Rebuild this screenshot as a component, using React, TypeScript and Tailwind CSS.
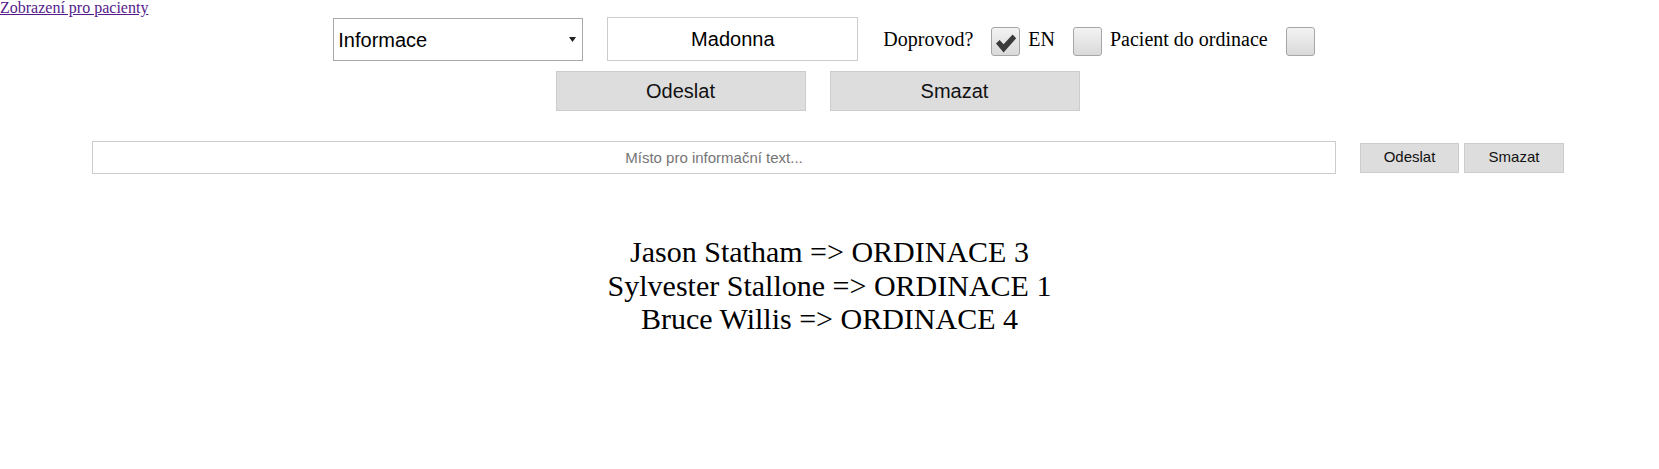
import React from "react";

function Box({ checked }: { checked?: boolean }) {
  return (
    <div className="mt-[5px] w-[29px] h-[29px] shrink-0 rounded-[3px] border border-[#a6a6a6] bg-gradient-to-b from-[#f3f3f3] to-[#d9d9d9]">
      {checked && (
        <svg width="27" height="27" viewBox="0 0 27 27" className="block">
          <path
            d="M4 15.5 L7.6 12 L11.6 16.2 L20.6 6.6 L24.2 10.2 L11.6 24.4 Z"
            fill="#3a3a3a"
          />
        </svg>
      )}
    </div>
  );
}

export default function App() {
  return (
    <div className="w-[1659px] h-[469px] bg-white text-black font-['Liberation_Sans',Arial,sans-serif]">
      <div className="h-[17px] leading-[16px] text-[16px] font-['Liberation_Serif','Times_New_Roman',serif]">
        <a href="#" className="text-[#551a8b] underline">
          Zobrazení pro pacienty
        </a>
      </div>

      <div className="flex justify-center items-center h-[44px] pr-[11px]">
        <div className="self-end w-[250px] h-[43px] mr-[24px] border border-[#a9a9a9] bg-white flex items-center pl-[4px] pr-[6px] text-[20px] shrink-0">
          <span className="flex-1">Informace</span>
          <svg width="7" height="5" viewBox="0 0 7 5" className="block">
            <path d="M0 0 L7 0 L3.5 5 Z" fill="#222" />
          </svg>
        </div>
        <input
          readOnly
          value="Madonna"
          className="w-[251px] h-[44px] mr-[25px] border border-[#cccccc] bg-white text-center text-[20px] text-black outline-none shrink-0 font-['Liberation_Sans',Arial,sans-serif]"
        />
        <div className="flex items-center text-[20px] font-['Liberation_Serif','Times_New_Roman',serif] whitespace-nowrap">
          <span className="mr-[18px]">Doprovod?</span>
          <Box checked />
          <span className="ml-[8px] mr-[18px]">EN</span>
          <Box />
          <span className="ml-[8px] mr-[18px]">Pacient do ordinace</span>
          <Box />
        </div>
      </div>

      <div className="flex justify-center mt-[10px] h-[40px]">
        <button className="w-[250px] h-[40px] mr-[24px] bg-[#dddddd] border border-[#cccccc] text-[20px] text-[#111]">
          Odeslat
        </button>
        <button className="w-[250px] h-[40px] mr-[24px] bg-[#dddddd] border border-[#cccccc] text-[20px] text-[#111]">
          Smazat
        </button>
      </div>

      <div className="flex justify-center items-center mt-[30px] h-[33px] pr-[3px]">
        <input
          readOnly
          placeholder="Místo pro informační text..."
          className="w-[1244px] h-[33px] mr-[24px] border border-[#cccccc] bg-white text-center text-[15px] placeholder:text-[#757575] outline-none shrink-0 font-['Liberation_Sans',Arial,sans-serif]"
        />
        <button className="w-[99px] h-[30px] bg-[#dddddd] border border-[#cccccc] text-[15px] text-[#111] shrink-0">
          Odeslat
        </button>
        <button className="w-[100px] h-[30px] ml-[5px] bg-[#dddddd] border border-[#cccccc] text-[15px] text-[#111] shrink-0">
          Smazat
        </button>
      </div>

      <div className="mt-[61px] text-center text-[30px] leading-[33.5px] font-['Liberation_Serif','Times_New_Roman',serif]">
        <div>Jason Statham =&gt; ORDINACE 3</div>
        <div>Sylvester Stallone =&gt; ORDINACE 1</div>
        <div>Bruce Willis =&gt; ORDINACE 4</div>
      </div>
    </div>
  );
}
